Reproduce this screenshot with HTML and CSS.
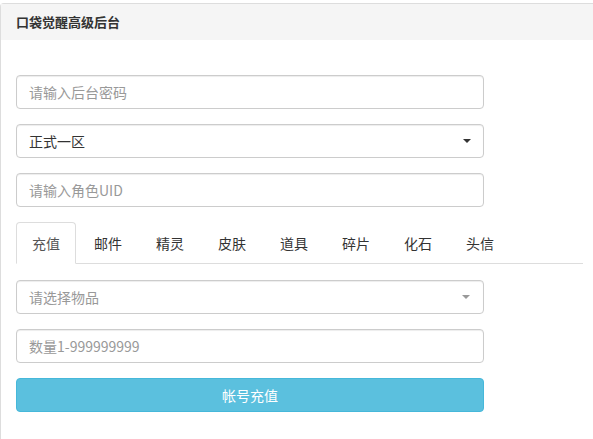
FILE: index.html
```html
<!DOCTYPE html>
<html lang="zh-CN">
<head>
<meta charset="utf-8">
<title>口袋觉醒高级后台</title>
<link rel="stylesheet" href="styles.css">
</head>
<body>
<div class="panel">
  <div class="panel-heading">口袋觉醒高级后台</div>
  <div class="panel-body">
    <form class="form">
      <div class="form-group"><input class="form-control" type="password" placeholder="请输入后台密码"></div>
      <div class="form-group">
        <div class="form-control select">
          <span>正式一区</span>
          <span class="caret dark"></span>
        </div>
      </div>
      <div class="form-group"><input class="form-control" type="text" placeholder="请输入角色UID"></div>
    </form>
    <ul class="nav-tabs">
      <li class="active"><a>充值</a></li>
      <li><a>邮件</a></li>
      <li><a>精灵</a></li>
      <li><a>皮肤</a></li>
      <li><a>道具</a></li>
      <li><a>碎片</a></li>
      <li><a>化石</a></li>
      <li><a>头信</a></li>
    </ul>
    <div class="tab-content">
      <div class="form-group">
        <div class="form-control select">
          <span class="placeholder">请选择物品</span>
          <span class="caret light"></span>
        </div>
      </div>
      <div class="form-group"><input class="form-control" type="text" placeholder="数量1-999999999"></div>
      <div class="form-group last"><button class="btn-info" type="button">帐号充值</button></div>
    </div>
  </div>
</div>
</body>
</html>
```
FILE: styles.css
```css
* { box-sizing: border-box; }
html, body { margin: 0; padding: 0; background: #fff; }
body {
  font-family: "Noto Sans CJK SC", "Liberation Sans", sans-serif;
  font-size: 14px;
  color: #333;
  overflow: hidden;
}
.panel {
  margin-top: 3px;
  width: 599px;
  height: 436px;
  border: 1px solid #ddd;
  border-bottom: none;
  border-radius: 4px 4px 0 0;
  background: #fff;
}
.panel-heading {
  background: #f5f5f5;
  padding: 0 15px;
  height: 36px;
  line-height: 36px;
  font-size: 13px;
  font-weight: bold;
  color: #333;
}
.panel-body { padding: 35px 15px 0; }
.form-group { width: 468px; margin-bottom: 15px; }
.form-group.last { margin-bottom: 0; }
.form-control {
  display: block;
  width: 100%;
  height: 34px;
  padding: 6px 12px;
  font-family: inherit;
  font-size: 14px;
  color: #555;
  background: #fff;
  border: 1px solid #ccc;
  border-radius: 4px;
  box-shadow: inset 0 1px 1px rgba(0,0,0,.075);
  outline: none;
}
.form-control::placeholder { color: #999; }
.select {
  display: flex;
  align-items: center;
  justify-content: space-between;
  color: #333;
  line-height: 20px;
  padding-right: 12px;
}
.placeholder { color: #999; }
.caret {
  width: 0; height: 0;
  border-left: 4px solid transparent;
  border-right: 4px solid transparent;
  border-top: 4px solid #333;
}
.caret.light { border-top-color: #999; margin-right: 1px; }
.nav-tabs {
  list-style: none;
  margin: 0;
  padding: 0;
  display: flex;
  border-bottom: 1px solid #ddd;
}
.nav-tabs li { margin-bottom: -1px; }
.nav-tabs a {
  display: block;
  margin-right: 2px;
  padding: 10px 15px;
  line-height: 20px;
  border: 1px solid transparent;
  border-radius: 4px 4px 0 0;
  color: #333;
}
.nav-tabs li.active a {
  border-color: #ddd;
  border-bottom-color: #fff;
  background: #fff;
  color: #555;
}
.tab-content { padding-top: 16px; }
.btn-info {
  display: block;
  width: 100%;
  height: 34px;
  font-family: inherit;
  font-size: 14px;
  color: #fff;
  background: #5bc0de;
  border: 1px solid #46b8da;
  border-radius: 4px;
}
```
